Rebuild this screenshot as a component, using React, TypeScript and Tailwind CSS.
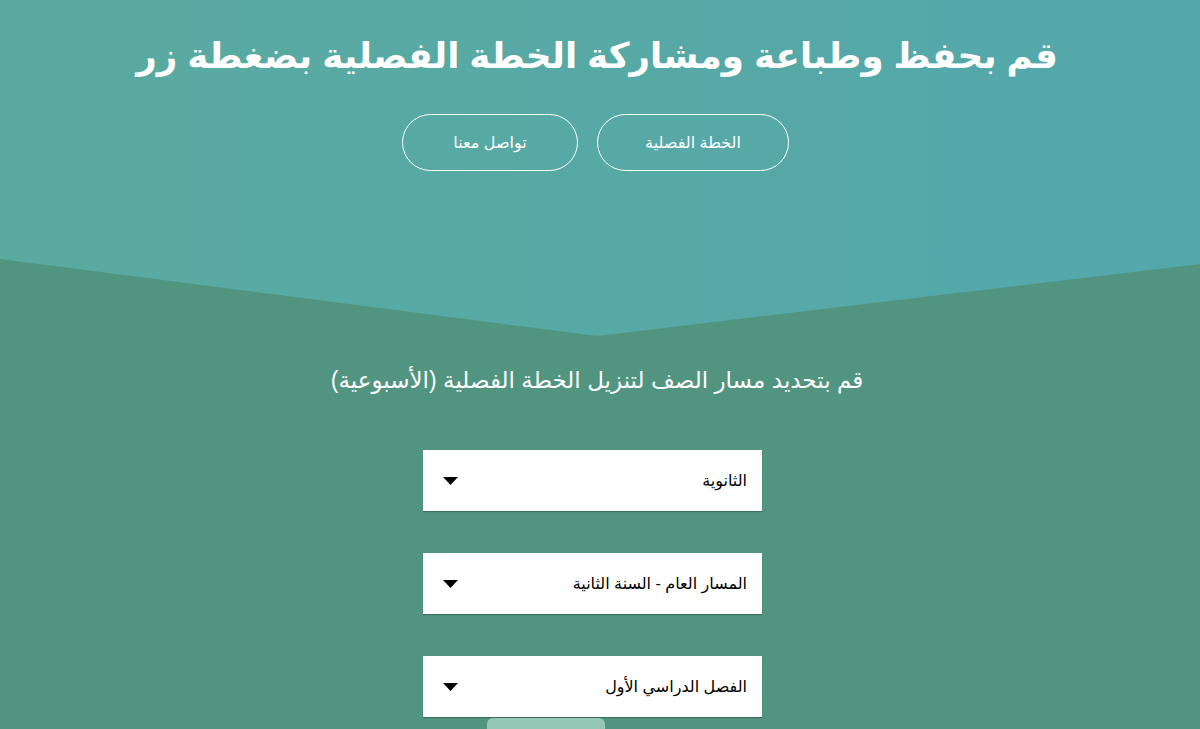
const selects = ["الثانوية", "المسار العام - السنة الثانية", "الفصل الدراسي الأول"]

const Caret = () => (
  <svg width="15" height="8" viewBox="0 0 15 8" className="shrink-0">
    <path d="M0 0 L15 0 L7.5 8 Z" fill="#000" />
  </svg>
)

export default function App() {
  return (
    <div
      dir="rtl"
      className="min-h-[729px] bg-[#51947f] text-white overflow-hidden font-['Liberation_Sans','DejaVu_Sans',sans-serif]"
    >
      <header className="h-[336px] bg-gradient-to-r from-[#5aaaa0] to-[#54a8ab] [clip-path:polygon(0_0,100%_0,100%_264px,49.75%_336px,0_259px)]">
        <div className="mr-[15px] flex flex-col items-center pt-[26px]">
          <h1 className="text-[35.7px] leading-[60px] font-bold whitespace-nowrap ml-[9px]">
            قم بحفظ وطباعة ومشاركة الخطة الفصلية بضغطة زر
          </h1>
          <nav className="flex gap-[19px] mt-[28px] ml-[6px]">
            <a className="w-[192px] h-[57px] flex items-center justify-center rounded-full border-[1.5px] border-white text-[16px]">
              الخطة الفصلية
            </a>
            <a className="w-[176px] h-[57px] flex items-center justify-center rounded-full border-[1.5px] border-white text-[16px]">
              تواصل معنا
            </a>
          </nav>
        </div>
      </header>

      <main className="mr-[15px] flex flex-col items-center">
        <h2 className="text-[23px] leading-[30px] mt-[29px] ml-[9px]">
          قم بتحديد مسار الصف لتنزيل الخطة الفصلية (الأسبوعية)
        </h2>
        <div className="flex flex-col gap-[42px] mt-[55px] w-[339px]">
          {selects.map((s) => (
            <div
              key={s}
              className="h-[61px] bg-white text-black text-[16px] flex items-center justify-between pr-[15px] pl-[20px] shadow-[0_1px_1px_rgba(0,0,0,0.25)]"
            >
              <span>{s}</span>
              <Caret />
            </div>
          ))}
        </div>
        <div dir="ltr" className="w-[339px] mt-px">
          <button className="ml-[64px] w-[118px] h-[40px] rounded-t-[6px] bg-[#93c8b7] text-[#2f5f52] text-[15px] leading-[18px] pt-[8px] flex justify-center">
            تنزيل الخطة
          </button>
        </div>
      </main>
    </div>
  )
}
